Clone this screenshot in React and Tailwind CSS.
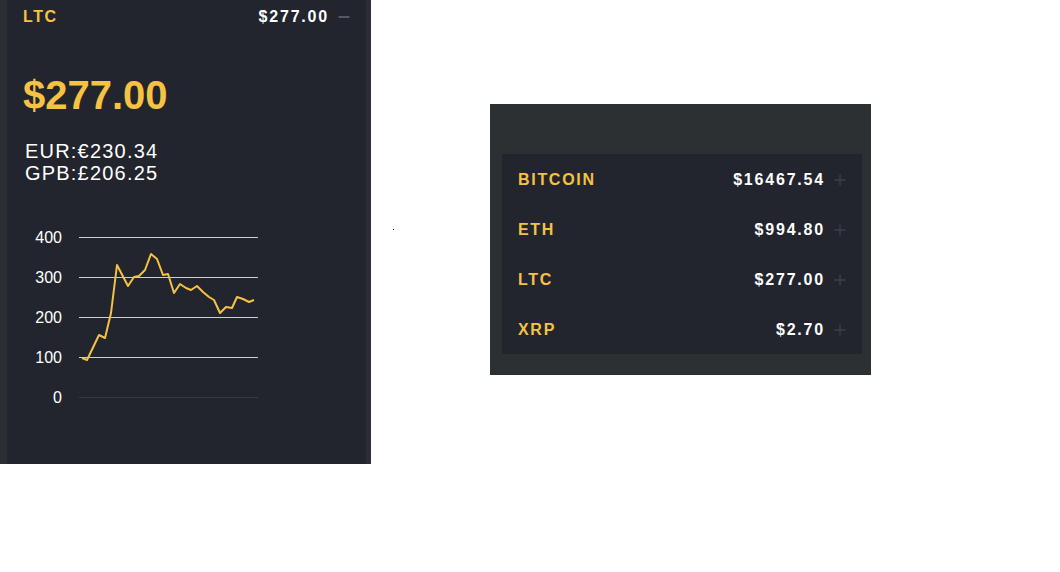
const coins = [
  { name: 'BITCOIN', price: '$16467.54' },
  { name: 'ETH', price: '$994.80' },
  { name: 'LTC', price: '$277.00' },
  { name: 'XRP', price: '$2.70' },
];

const points =
  '75,174 80,176 92,151 98,154 104,129 110,81 121,102 127,93 132,92 138,86 144,70 150,75 156,91 161,90 167,109 173,100 179,104 184,106 190,102 196,108 202,113 207,116 213,129 219,123 225,124 230,113 236,115 242,118 247,116';

const ticks = [
  { label: '400', y: 53 },
  { label: '300', y: 93 },
  { label: '200', y: 133 },
  { label: '100', y: 173 },
  { label: '0', y: 213 },
];

function Plus() {
  return (
    <svg width="12" height="12" viewBox="0 0 12 12" className="shrink-0">
      <path d="M6 0.5v11M0.5 6h11" stroke="#3c3f45" strokeWidth="1.4" fill="none" />
    </svg>
  );
}

function Minus() {
  return (
    <svg width="12" height="12" viewBox="0 0 12 12" className="shrink-0">
      <path d="M0.5 6h11" stroke="#6d7075" strokeWidth="1.4" fill="none" />
    </svg>
  );
}

function Chart() {
  return (
    <svg width="359" height="280" viewBox="0 0 359 280" className="block">
      {ticks.map((t) => (
        <g key={t.label}>
          <line
            x1="72"
            x2="251"
            y1={t.y + 0.5}
            y2={t.y + 0.5}
            stroke={t.label === '0' ? '#36393f' : '#cfcfcf'}
            strokeWidth="1"
          />
          <text
            x="55"
            y={t.y + 6}
            textAnchor="end"
            fill="#ffffff"
            fontSize="16"
            fontFamily="'Liberation Sans', Arial, sans-serif"
          >
            {t.label}
          </text>
        </g>
      ))}
      <polyline points={points} fill="none" stroke="#f5c243" strokeWidth="2" strokeLinejoin="round" />
    </svg>
  );
}

export default function App() {
  return (
    <div className="min-h-[572px] bg-white flex items-start font-['Liberation_Sans',Arial,sans-serif]">
      {/* Detail panel */}
      <div className="w-[371px] h-[464px] bg-[#2b2f33] pl-[7px] pr-[5px] shrink-0">
        <div className="h-full bg-[#22252d] flex flex-col">
          <div className="h-[34px] flex items-center justify-between px-4">
            <span className="text-[16px] font-bold tracking-[1.6px] text-[#f5c243]">LTC</span>
            <div className="flex items-center gap-[9px]">
              <span className="text-[16px] font-bold tracking-[1.8px] text-white">$277.00</span>
              <Minus />
            </div>
          </div>
          <div className="mt-[41px] px-4 text-[40px] leading-[40px] font-bold text-[#f5c243]">$277.00</div>
          <div className="mt-[25px] pl-[18px] text-[20px] leading-[22px] tracking-[1.2px] text-white">
            <div>EUR:€230.34</div>
            <div>GPB:£206.25</div>
          </div>
          <Chart />
        </div>
      </div>

      <div className="ml-[22px] mt-[229px] w-px h-px bg-black shrink-0" />

      {/* Coin list */}
      <div className="ml-[96px] mt-[104px] w-[381px] bg-[#2d3033] pt-[50px] pb-[21px] pl-[12px] pr-[9px] shrink-0">
        <div className="bg-[#22252d]">
          {coins.map((c) => (
            <div key={c.name} className="h-[50px] flex items-center justify-between px-4 pt-px">
              <span className="text-[16px] font-bold tracking-[1.7px] text-[#f5c243]">{c.name}</span>
              <div className="flex items-center gap-[9px]">
                <span className="text-[16px] font-bold tracking-[1.8px] text-white">{c.price}</span>
                <Plus />
              </div>
            </div>
          ))}
        </div>
      </div>
    </div>
  );
}
